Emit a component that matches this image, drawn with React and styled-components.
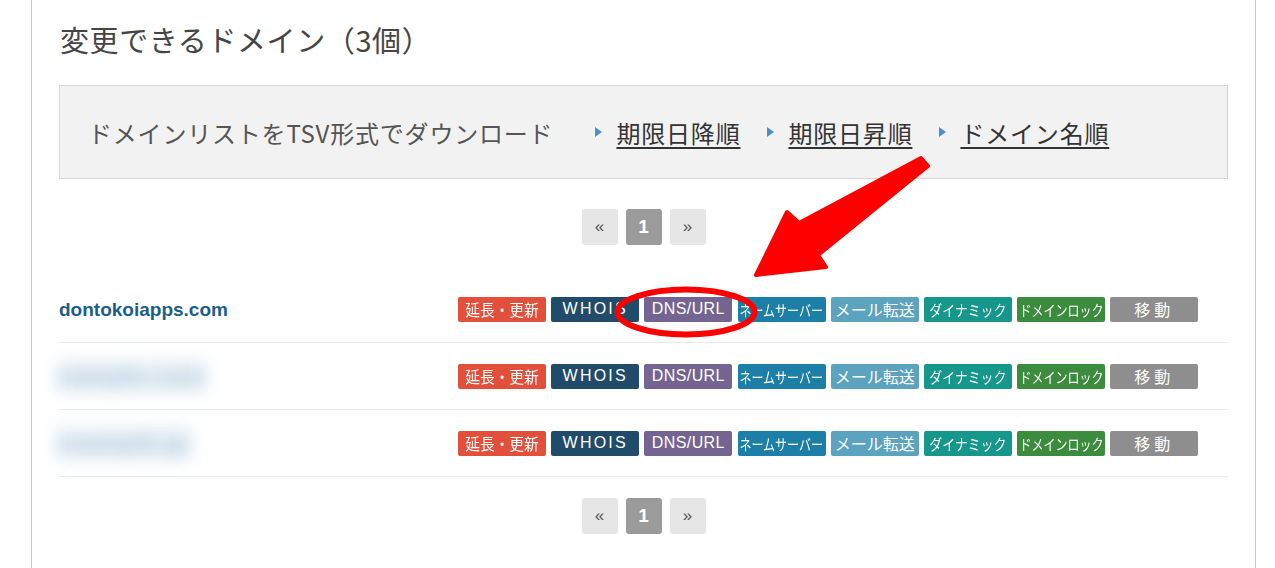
import React from "react";
import styled, { createGlobalStyle } from "styled-components";

const GlobalStyle = createGlobalStyle`
  html, body {
    margin: 0;
    padding: 0;
    background: #ffffff;
  }
  body {
    font-family: "Noto Sans CJK JP", "Liberation Sans", sans-serif;
    color: #333;
  }
`;

const badges = [
  { label: "延長・更新", bg: "#e2503c", size: 16, squeeze: 0.92 },
  { label: "WHOIS", bg: "#214b6a", size: 16, squeeze: 1, latin: true, spacing: 2.2 },
  { label: "DNS/URL", bg: "#736491", size: 16, squeeze: 1, latin: true, spacing: 0.4 },
  { label: "ネームサーバー", bg: "#1b7fa7", size: 15, squeeze: 0.8 },
  { label: "メール転送", bg: "#5ba3bf", size: 16, squeeze: 1 },
  { label: "ダイナミック", bg: "#16978c", size: 15, squeeze: 0.86 },
  { label: "ドメインロック", bg: "#3b8c3c", size: 15, squeeze: 0.8 },
  { label: "移動", bg: "#8e8e8e", size: 16, squeeze: 1, spacing: 4 },
];

const domains = [
  { name: "dontokoiapps.com", hidden: false },
  { name: "sample.com", hidden: true },
  { name: "example.jp", hidden: true },
];

const sorts = ["期限日降順", "期限日昇順", "ドメイン名順"];

const Pager = () => (
  <Pagination>
    <PageButton>«</PageButton>
    <PageButton active>1</PageButton>
    <PageButton>»</PageButton>
  </Pagination>
);

const App = () => {
  return (
    <Page>
      <GlobalStyle />
      <Panel>
        <Heading>変更できるドメイン（3個）</Heading>
        <DownloadBox>
          <DownloadLabel>ドメインリストをTSV形式でダウンロード</DownloadLabel>
          <SortLinks>
            {sorts.map((s) => (
              <SortLink key={s}>
                <Marker />
                <LinkText>{s}</LinkText>
              </SortLink>
            ))}
          </SortLinks>
        </DownloadBox>

        <Pager />

        <DomainList>
          {domains.map((d) => (
            <DomainRow key={d.name}>
              <DomainCell>
                <DomainName hidden_={d.hidden}>{d.name}</DomainName>
              </DomainCell>
              <Badges>
                {badges.map((b) => (
                  <Badge key={b.label} bg={b.bg}>
                    <BadgeText
                      size={b.size}
                      squeeze={b.squeeze}
                      latin={b.latin}
                      spacing={b.spacing || 0}
                    >
                      {b.label}
                    </BadgeText>
                  </Badge>
                ))}
              </Badges>
            </DomainRow>
          ))}
        </DomainList>

        <BottomPager>
          <Pager />
        </BottomPager>
      </Panel>

      <Annotation viewBox="0 0 1275 568" width="1275" height="568">
        <polygon
          points="921,158 799,223 787,212 756,275 826,267 818,255 928,166"
          fill="#ff0000"
          stroke="#ff0000"
          strokeWidth="4"
          strokeLinejoin="round"
        />
        <ellipse
          cx="686"
          cy="312"
          rx="68.5"
          ry="22.5"
          fill="none"
          stroke="#ff0000"
          strokeWidth="6"
        />
      </Annotation>
    </Page>
  );
};

export default App;

const Page = styled.div`
  position: relative;
  width: 1275px;
  height: 568px;
  overflow: hidden;
`;

const Panel = styled.div`
  margin-left: 31px;
  width: 1169px;
  min-height: 568px;
  padding: 18px 27px 0 27px;
  border-left: 1px solid #cccccc;
  border-right: 1px solid #cccccc;
`;

const Heading = styled.h2`
  margin: 0 0 0 1px;
  height: 42px;
  line-height: 42px;
  font-size: 29px;
  font-weight: normal;
  color: #454545;
  letter-spacing: 0.6px;
`;

const DownloadBox = styled.div`
  margin-top: 25px;
  height: 92px;
  display: flex;
  align-items: center;
  padding: 0 28px;
  background: #f2f2f2;
  border: 1px solid #d5d5d5;
  font-size: 24px;
  color: #555;
`;

const DownloadLabel = styled.span`
  letter-spacing: 0.8px;
`;

const SortLinks = styled.div`
  display: flex;
  align-items: center;
  gap: 27px;
  margin-left: 42px;
`;

const SortLink = styled.a`
  display: flex;
  align-items: center;
  gap: 14px;
  color: #333;
  cursor: pointer;
`;

const Marker = styled.span`
  width: 0;
  height: 0;
  border-top: 5px solid transparent;
  border-bottom: 5px solid transparent;
  border-left: 7px solid #4c8fcc;
`;

const LinkText = styled.span`
  text-decoration: underline;
  text-underline-offset: 4px;
  font-size: 24px;
  letter-spacing: 0.8px;
`;

const Pagination = styled.div`
  display: flex;
  justify-content: center;
  gap: 8px;
  margin: 30px 0 31px;
`;

const PageButton = styled.span`
  width: 36px;
  height: 36px;
  border-radius: 3px;
  display: flex;
  align-items: center;
  justify-content: center;
  font-family: "Liberation Sans", Arial, sans-serif;
  background: ${(p) => (p.active ? "#9b9b9b" : "#e6e6e6")};
  color: ${(p) => (p.active ? "#ffffff" : "#555555")};
  font-weight: ${(p) => (p.active ? "bold" : "normal")};
  font-size: ${(p) => (p.active ? "19px" : "17px")};
`;

const BottomPager = styled.div`
  & > div {
    margin-top: 21px;
  }
`;

const DomainList = styled.div`
  display: flex;
  flex-direction: column;
`;

const DomainRow = styled.div`
  height: 66px;
  display: flex;
  align-items: center;
  border-bottom: 1px solid #ebebeb;
`;

const DomainCell = styled.div`
  width: 399px;
  flex-shrink: 0;
`;

const DomainName = styled.span`
  display: inline-block;
  font-family: "Liberation Sans", Arial, sans-serif;
  font-size: 19px;
  font-weight: bold;
  color: #1b5e8c;
  ${(p) =>
    p.hidden_ &&
    `
    font-size: 25px;
    color: #9dbdd6;
    background: #e4edf4;
    opacity: 0.8;
    filter: blur(8px);
    padding: 2px 4px;
    margin-left: -4px;
  `}
`;

const Badges = styled.div`
  display: flex;
  gap: 5.2px;
`;

const Badge = styled.span`
  width: 88px;
  height: 25px;
  border-radius: 2px;
  background: ${(p) => p.bg};
  display: flex;
  align-items: center;
  justify-content: center;
  overflow: hidden;
`;

const BadgeText = styled.span`
  display: inline-block;
  white-space: nowrap;
  color: #ffffff;
  font-size: ${(p) => p.size}px;
  line-height: 1;
  letter-spacing: ${(p) => p.spacing}px;
  font-family: ${(p) =>
    p.latin
      ? `"Liberation Sans", Arial, sans-serif`
      : `"Noto Sans CJK JP", sans-serif`};
  transform: scaleX(${(p) => p.squeeze});
`;

const Annotation = styled.svg`
  position: absolute;
  left: 0;
  top: 0;
  pointer-events: none;
`;
